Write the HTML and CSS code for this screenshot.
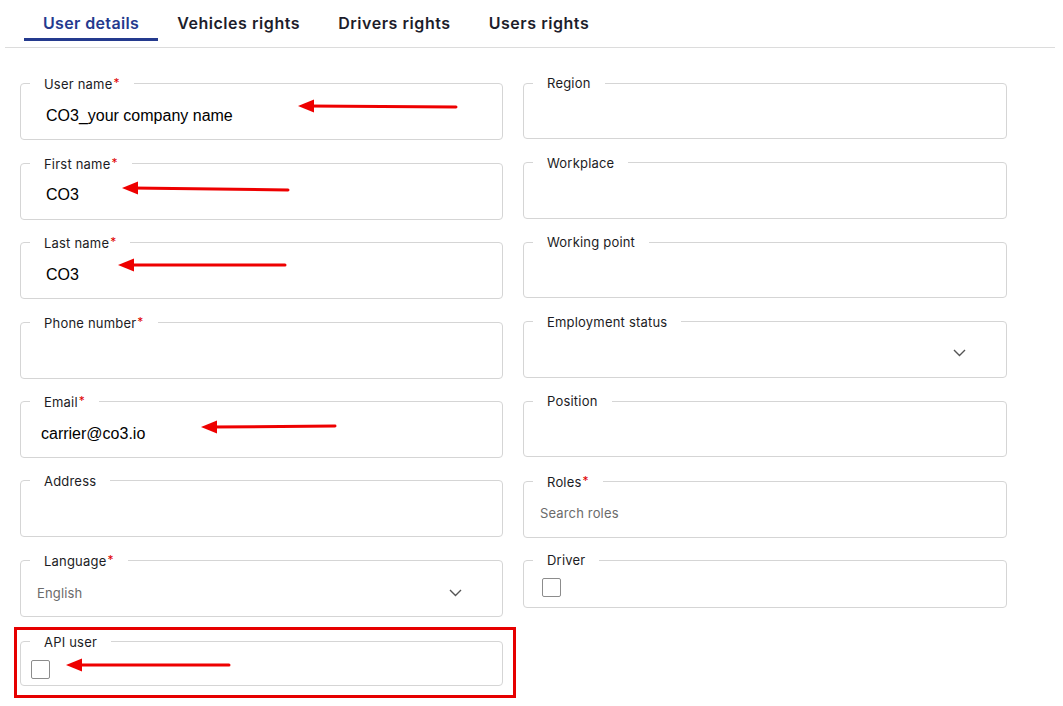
FILE: index.html
```html
<!DOCTYPE html>
<html lang="en">
<head>
<meta charset="utf-8">
<title>User details</title>
<link rel="stylesheet" href="styles.css">
</head>
<body>
<div class="page">
  <nav class="tabs">
    <div class="tab-list">
      <a class="tab tab--active">User details</a>
      <a class="tab">Vehicles rights</a>
      <a class="tab">Drivers rights</a>
      <a class="tab">Users rights</a>
    </div>
  </nav>

  <form class="form">
    <fieldset class="field">
      <legend class="field__label">User name<span class="req">*</span></legend>
      <div class="field__body field__body--value"><span class="field__value">CO3_your company name</span></div>
    </fieldset>
    <fieldset class="field">
      <legend class="field__label">Region</legend>
      <div class="field__body"></div>
    </fieldset>

    <fieldset class="field">
      <legend class="field__label">First name<span class="req">*</span></legend>
      <div class="field__body field__body--value"><span class="field__value">CO3</span></div>
    </fieldset>
    <fieldset class="field">
      <legend class="field__label">Workplace</legend>
      <div class="field__body"></div>
    </fieldset>

    <fieldset class="field">
      <legend class="field__label">Last name<span class="req">*</span></legend>
      <div class="field__body field__body--value"><span class="field__value">CO3</span></div>
    </fieldset>
    <fieldset class="field">
      <legend class="field__label">Working point</legend>
      <div class="field__body"></div>
    </fieldset>

    <fieldset class="field">
      <legend class="field__label">Phone number<span class="req">*</span></legend>
      <div class="field__body"></div>
    </fieldset>
    <fieldset class="field">
      <legend class="field__label">Employment status</legend>
      <div class="field__body field__body--select">
        <span class="field__placeholder"></span>
        <svg class="chevron" width="13" height="8" viewBox="0 0 13 8"><polyline points="1,1 6.5,6.5 12,1" fill="none" stroke="#555" stroke-width="1.4"/></svg>
      </div>
    </fieldset>

    <fieldset class="field">
      <legend class="field__label">Email<span class="req">*</span></legend>
      <div class="field__body field__body--email"><span class="field__value">carrier@co3.io</span></div>
    </fieldset>
    <fieldset class="field">
      <legend class="field__label">Position</legend>
      <div class="field__body"></div>
    </fieldset>

    <fieldset class="field">
      <legend class="field__label">Address</legend>
      <div class="field__body"></div>
    </fieldset>
    <fieldset class="field">
      <legend class="field__label">Roles<span class="req">*</span></legend>
      <div class="field__body field__body--select"><span class="field__placeholder">Search roles</span></div>
    </fieldset>

    <fieldset class="field">
      <legend class="field__label">Language<span class="req">*</span></legend>
      <div class="field__body field__body--select">
        <span class="field__placeholder">English</span>
        <svg class="chevron" width="13" height="8" viewBox="0 0 13 8"><polyline points="1,1 6.5,6.5 12,1" fill="none" stroke="#555" stroke-width="1.4"/></svg>
      </div>
    </fieldset>
    <fieldset class="field">
      <legend class="field__label">Driver</legend>
      <div class="field__body field__body--check-driver"><input type="checkbox" class="check"></div>
    </fieldset>

    <fieldset class="field field--api">
      <legend class="field__label">API user</legend>
      <div class="field__body field__body--check-api"><input type="checkbox" class="check"></div>
    </fieldset>
  </form>

  <div class="highlight"></div>
  <svg class="annotations" width="1063" height="706" viewBox="0 0 1063 706">
    <g stroke="#ee0000" stroke-width="3" fill="none" stroke-linecap="round">
      <line x1="456" y1="107" x2="308" y2="106"/>
      <line x1="288" y1="190" x2="132" y2="188"/>
      <line x1="285" y1="265" x2="128" y2="265"/>
      <line x1="335" y1="426" x2="211" y2="427"/>
      <line x1="229" y1="665" x2="76" y2="665"/>
    </g>
    <g fill="#ee0000">
      <polygon points="298,106 314,99.5 314,112.5"/>
      <polygon points="122,188 138,181.5 138,194.5"/>
      <polygon points="118,265 134,258.5 134,271.5"/>
      <polygon points="201,427 217,420.5 217,433.5"/>
      <polygon points="66,665 82,658.5 82,671.5"/>
    </g>
  </svg>
</div>
</body>
</html>
```

FILE: styles.css
```css
* { box-sizing: border-box; }

html, body {
  margin: 0;
  padding: 0;
  background: #ffffff;
}

body {
  font-family: Inter, "Open Sans", "Liberation Sans", sans-serif;
  color: #1d1d2b;
}

.page {
  position: relative;
  width: 1063px;
  height: 706px;
  overflow: hidden;
}

/* Tabs */
.tabs {
  margin: 0 8px 0 5px;
  padding-bottom: 6px;
  border-bottom: 1px solid #dcdcdc;
}

.tab-list {
  display: flex;
  padding-left: 19px;
}

.tab {
  display: block;
  padding: 12px 19px 4px;
  line-height: 22px;
  font-size: 16px;
  font-weight: 600;
  letter-spacing: 0.55px;
  color: #1d1d2b;
  border-bottom: 3px solid transparent;
  cursor: pointer;
}

.tab--active {
  color: #243a8e;
  border-bottom-color: #243a8e;
  letter-spacing: 0.35px;
}

/* Form */
.form {
  display: grid;
  grid-template-columns: 483px 484px;
  column-gap: 20px;
  row-gap: 14.5px;
  align-items: start;
  margin-top: 27px;
  padding-left: 20px;
}

.field {
  margin: 0;
  padding: 0;
  min-width: 0;
  border: 1px solid #d5d5d5;
  border-radius: 4px;
}

.field--api {
  margin-top: 2px;
}

.field__label {
  margin-left: 9px;
  padding: 0 14px;
  font-size: 13px;
  line-height: 16px;
  font-weight: 400;
  color: #1c1c24;
  letter-spacing: 0.2px;
}

.req {
  color: #e00000;
  font-size: 12px;
  vertical-align: 2px;
  margin-left: 1px;
}

.field__body {
  height: 47px;
  display: flex;
  align-items: center;
}

.field__body--value {
  padding-left: 25px;
}

.field__body--email {
  padding-left: 20px;
}

.field__value {
  font-family: "Liberation Sans", Arial, sans-serif;
  font-size: 16px;
  color: #000000;
}

.field__body--select {
  justify-content: space-between;
  padding-left: 16px;
  padding-right: 40px;
}

.field__placeholder {
  font-size: 13px;
  color: #6b6b6b;
  letter-spacing: 0.15px;
}

.chevron {
  display: block;
}

.field__body--check-driver {
  height: 39px;
  padding-left: 18px;
}

.field__body--check-api {
  height: 35px;
  padding-left: 10px;
  padding-top: 4px;
}

.check {
  appearance: none;
  -webkit-appearance: none;
  margin: 0;
  width: 19px;
  height: 19px;
  border: 1px solid #8c8c8c;
  border-radius: 2px;
  background: #fff;
}

/* Annotations drawn over the screenshot */
.highlight {
  position: absolute;
  left: 14px;
  top: 627px;
  width: 502px;
  height: 71px;
  border: 3px solid #e60000;
  pointer-events: none;
}

.annotations {
  position: absolute;
  left: 0;
  top: 0;
  pointer-events: none;
}
```
